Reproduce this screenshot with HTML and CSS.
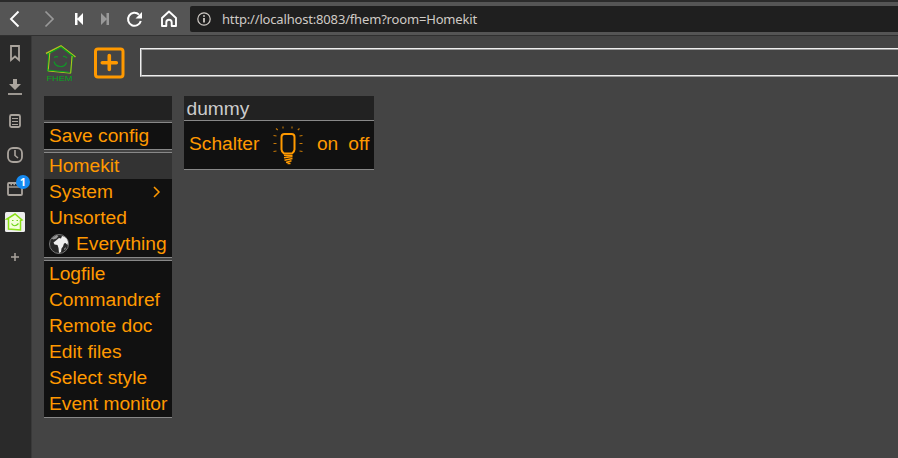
FILE: index.html
```
<!DOCTYPE html>
<html lang="en">
<head>
<meta charset="utf-8">
<title>Homekit</title>
<link rel="stylesheet" href="styles.css">
</head>
<body>
<header class="toolbar">
  <svg class="nav" width="190" height="33" viewBox="0 2 190 33" fill="none">
    <path d="M18.500 11.500 11 19l7.500 7.500" stroke="#fff" stroke-width="1.900"/>
    <path d="M45.500 11.500 53 19l-7.500 7.500" stroke="#999" stroke-width="1.700"/>
    <path d="M75 13h2.500v12H75zM83 13v12l-6-6z" fill="#fff"/>
    <path d="M106.500 13h2.500v12h-2.500zM101 13v12l6-6z" fill="#999"/>
    <path d="M139 14.600A6.500 6.500 0 1 0 140.800 21" stroke="#fff" stroke-width="2"/>
    <path d="M142 12v6.500h-6.500z" fill="#fff"/>
    <path d="M162 26V18l7-6.500 7 6.500v8h-4.300v-3.500a2.700 2.700 0 0 0-5.400 0V26z" stroke="#fff" stroke-width="1.900" stroke-linejoin="round"/>
  </svg>
  <div class="address">
    <svg width="14" height="14" viewBox="0 0 14 14" fill="none" stroke="#d0cbc6"><circle cx="7" cy="7" r="6.200" stroke-width="1.200"/><path d="M7 3.200v1.600M7 6v4.500" stroke-width="1.800"/></svg>
    <span class="url">http://localhost:8083/fhem?room=Homekit</span>
  </div>
</header>
<div class="main">
  <aside class="panel">
    <svg width="31" height="422" viewBox="0 36 31 422" fill="none" stroke="#aaa49d" stroke-width="1.800">
      <path d="M11 46h8v14l-4-3.500-4 3.500z"/>
      <path d="M13 79h4v5h4l-6 6-6-6h4z" fill="#aaa49d" stroke="none"/>
      <path d="M8 94h14"/>
      <rect x="10" y="115" width="10" height="12" rx="1.500"/>
      <path d="M12 118.500h6M12 121.500h6M12 124.500h6" stroke-width="1.200"/>
      <rect x="8" y="148" width="14" height="14" rx="5"/>
      <path d="M15 150v5.500l3 2.500" stroke-width="1.600"/>
      <rect x="8" y="183" width="14" height="12" rx="1"/>
      <path d="M8 187h14" stroke-width="1.400"/><path d="M10.500 184.500h8" stroke-width="1.400" stroke-dasharray="1.500 1.500"/>
      <circle cx="23" cy="182" r="7" fill="#168af0" stroke="none"/>
      <text class="badge" x="23" y="186" text-anchor="middle">1</text>
      <rect x="5" y="212" width="20" height="20" rx="1.500" fill="#eee" stroke="none"/>
      <path d="m7 219 8-5 7 6-1.500.5V230L8.500 229v-10z" fill="#f3ffda" stroke="#8be018" stroke-width="1.500"/>
      <path d="M12 220.500h1.500M16.500 220.500H18M11.500 223.500q3 4.500 7 0" stroke="#70d51c" stroke-width="1.200"/>
      <path d="M15 253v8M11 257h8" stroke-width="1.500"/>
    </svg>
  </aside>
  <main class="page">
    <div class="top">
      <svg class="logo" width="32" height="38" viewBox="0 0 32 38" fill="none">
        <path d="M1 8.500 16 1l14.500 11" stroke="#b6bf20" stroke-width="1.500"/>
        <path d="M2 9.500 16 2l13 10M4 8.500 2.500 26.500M27.500 11 25.500 28.500" stroke="#08a51e" stroke-width="1.300"/>
        <path d="M4.800 8 3.200 26l22.500 2.200L27 11" stroke="#b6bf20"/>
        <path d="M2.500 25l22 2.300" stroke="#08a51e"/>
        <path d="M9 12.500q2.500-1.500 4-.5M18 11.500q2-.5 4 1.500M9 16.500q1 4.500 6 5t6.500-4" stroke="#129628" stroke-width="1.200"/>
        <text class="brand" x="1.500" y="36" textLength="26" lengthAdjust="spacingAndGlyphs">FHEM</text>
      </svg>
      <svg class="plus" width="31" height="32" viewBox="0 0 31 32" fill="none" stroke="#f90"><rect x="1.500" y="2" width="27.500" height="28" rx="2.500" stroke-width="3"/><path d="M15.300 8.500v14M8.300 15.800h14" stroke-width="3.600" stroke-linecap="round"/></svg>
      <div class="command"></div>
    </div>
    <div class="columns">
      <nav class="menu">
        <div class="blank"></div>
        <div class="group"><a>Save config</a></div>
        <div class="group">
          <a class="current">Homekit</a>
          <a>System<svg class="chevron" width="8" height="12" viewBox="0 0 8 12" fill="none" stroke="#f90" stroke-width="1.500"><path d="m1 1 5 5-5 5"/></svg></a>
          <a>Unsorted</a>
          <a><svg class="globe" width="20" height="20" viewBox="0 0 20 20"><circle cx="10" cy="10" r="9.500" fill="#272727" stroke="#777"/><path d="m2.500 4.500 5-3.500 2 1-2 2.500-3 1z" fill="#999"/><path d="M7 6.500 10 4l2 .5 1-2.500q5 1 6 6l-.5 3-2-2-1.500.5-1 3-1.500 2-.5 3.500-2 1-.5-5-1-3-3-.5-1-2z" fill="#eee"/><path d="m15 15 2-2-1 3z" fill="#aaa"/></svg>Everything</a>
        </div>
        <div class="group"><a>Logfile</a><a>Commandref</a><a>Remote doc</a><a>Edit files</a><a>Select style</a><a>Event monitor</a></div>
      </nav>
      <section class="room">
        <div class="title">dummy</div>
        <div class="device">
          <span class="name">Schalter</span>
          <svg class="bulb" width="32" height="42" viewBox="0 0 32 42" fill="none" stroke="#f90">
            <path d="M12.500 11h7q3 0 3 3v12.500q0 2-2.500 4h-8q-2.500-2-2.500-4V14q0-3 3-3z" stroke-width="2"/>
            <path d="M12 32.300l8.500.4M12 34.800l8.500-1.300M12.500 37.300l8-1.800M14 39.500l5.500-1.700M15.500 40.500h3" stroke-width="1.500"/>
            <path d="M4 5.500 5.800 7M11 3.500v2M20 3.500v2M27.500 5.500 25.800 7M1.500 12.500l3 .5M1.500 20.500h3M1.500 28.500l3-.5M30.500 12.500l-3 .5M30.500 20.500h-3M30.500 28.500l-3-.5" stroke="#c47808" stroke-width="1.100"/>
          </svg>
          <span class="on">on</span><span>off</span>
        </div>
      </section>
    </div>
  </main>
</div>
</body>
</html>
```
FILE: styles.css
```
* { box-sizing: border-box; }
body { margin: 0; height: 458px; overflow: hidden; background: #444; font: 19.2px/26px "Liberation Sans", Arial, sans-serif; color: #f90; }
svg { display: block; flex: none; }
.toolbar { height: 36px; background: #555; border-top: 2px solid #2b2b2b; border-bottom: 1px solid #303030; display: flex; }
.address { flex: 1; height: 26px; margin-top: 4px; padding-left: 7px; background: #1f1f1f; border-radius: 2px 0 0 2px; display: flex; align-items: center; gap: 11px; }
.url { font: 13px/26px "Noto Sans", sans-serif; letter-spacing: -0.17px; color: #d0cbc6; white-space: nowrap; }
.main { display: flex; height: 422px; }
.panel { width: 32px; background: #2a2a2a; border-right: 1px solid #393939; }
.badge { font: bold 11px "Noto Sans", sans-serif; fill: #fff; stroke: none; }
.brand { font: 8px "Liberation Sans", sans-serif; fill: #08a51e; }
.page { flex: 1; min-width: 0; padding-left: 12px; }
.top { height: 60px; display: flex; }
.logo { margin: 9px 0 0 1px; }
.plus { margin: 11px 0 0 17px; }
.command { flex: 1; height: 29px; margin: 12px -3px 0 15px; border: 2px ridge #eee; }
.columns { display: flex; gap: 12px; align-items: flex-start; }
.menu { width: 128px; display: flex; flex-direction: column; gap: 2px; }
.blank { height: 24px; background: #222; }
.group { background: #111; border-top: 1px solid #888; border-bottom: 1px solid #888; }
.group a { display: flex; align-items: center; height: 26px; padding-left: 5px; white-space: nowrap; }
.group .current { background: #333; }
.chevron { margin: 0 11px 0 auto; }
.globe { margin-right: 7px; }
.room { width: 190px; background: #111; border-bottom: 1px solid #888; }
.title { height: 25px; padding-left: 2.5px; line-height: 25px; background: #222; border-bottom: 1px solid #888; color: #ccc; }
.device { height: 48px; display: flex; align-items: center; padding: 0 0 2px 5px; }
.bulb { margin: 0 12.500px 0 13px; }
.on { margin-right: 10px; }
```
